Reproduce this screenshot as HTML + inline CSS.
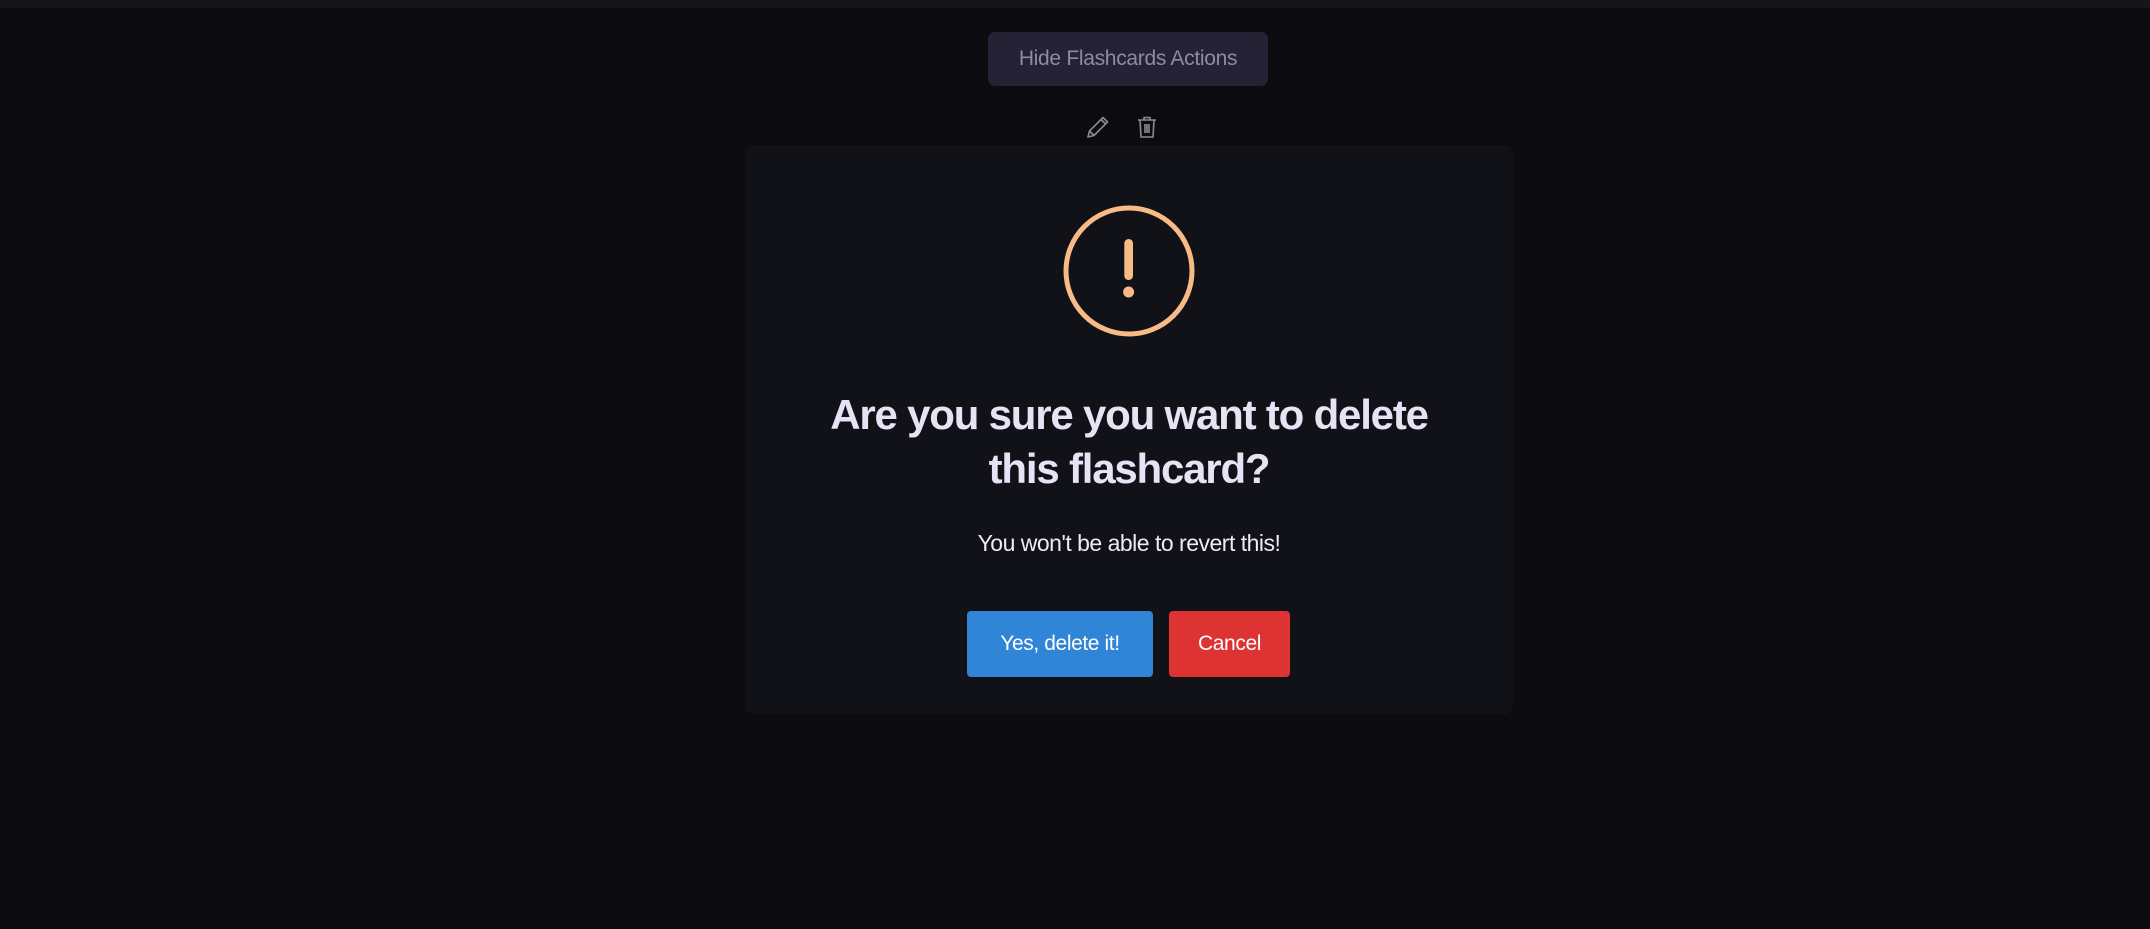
<!DOCTYPE html>
<html><head><meta charset="utf-8"><style>
html,body{margin:0;padding:0;width:2150px;height:929px;background:#0b0b10;overflow:hidden;font-family:"Liberation Sans",sans-serif;}
.top{position:absolute;left:0;top:0;width:2150px;height:8px;background:#15151c;}
.hide{position:absolute;left:988px;top:32px;width:280px;height:54px;background:#262236;border-radius:7px;color:#8f8aa3;font-size:21px;line-height:54px;text-align:center;letter-spacing:-0.3px;}
.modal{position:absolute;left:745px;top:145px;width:768px;height:569px;background:#111118;border-radius:8px;}
.t{position:absolute;left:0;width:768px;text-align:center;color:#e6e3f5;}
.h{top:388px;font-size:42px;line-height:54px;font-weight:bold;letter-spacing:-1.2px;}
.s{top:530px;font-size:23px;letter-spacing:-0.5px;color:#ecebf5;}
.btn{position:absolute;top:611px;height:66px;line-height:66px;color:#fff;font-size:21px;text-align:center;border-radius:4px;letter-spacing:-0.4px;}
</style></head><body>
<div class="top"></div>
<div class="hide">Hide Flashcards Actions</div>
<svg style="position:absolute;left:1086px;top:115px" width="26" height="24" viewBox="0 0 26 24" fill="none" stroke="#8a8a95" stroke-width="1.6" stroke-linejoin="round"><path d="M2 22 L3.5 16 L17 2.5 L21.5 7 L8 20.5 Z M3.5 16 L8 20.5 M15 4.5 L19.5 9"/></svg>
<svg style="position:absolute;left:1136px;top:115px" width="22" height="24" viewBox="0 0 22 24" fill="none" stroke="#8a8a95" stroke-width="1.6"><path d="M2 5 H20 M8 5 V2.5 H14 V5 M4 5 L5 22 H17 L18 5 M9 9 V18 M11 9 V18 M13 9 V18"/></svg>
<div class="modal"></div>
<svg style="position:absolute;left:1062px;top:204px" width="134" height="134" viewBox="0 0 134 134"><circle cx="67" cy="67" r="63" fill="none" stroke="#f8bb86" stroke-width="5"/><rect x="62.3" y="35" width="8.7" height="41" rx="4.3" fill="#f8bb86"/><circle cx="66.6" cy="88" r="5.5" fill="#f8bb86"/></svg>
<div class="t h" style="left:745px">Are you sure you want to delete<br>this flashcard?</div>
<div class="t s" style="left:745px">You won't be able to revert this!</div>
<div class="btn" style="left:967px;width:186px;background:#3085d6">Yes, delete it!</div>
<div class="btn" style="left:1169px;width:121px;background:#dd3333">Cancel</div>
</body></html>
